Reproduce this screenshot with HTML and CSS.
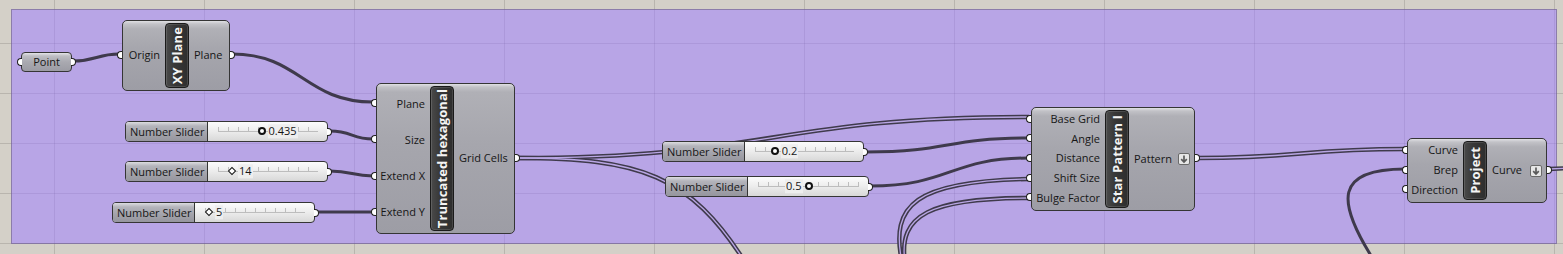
FILE: index.html
```html
<!DOCTYPE html>
<html lang="en">
<head>
  <meta charset="UTF-8">
  <title>Star Pattern definition</title>
  <link rel="stylesheet" href="styles.css">
</head>
<body>
  <div class="canvas">
    <div class="group"></div>

    <!-- wires sit over the group, under the components -->
    <svg class="wires" width="1563" height="254" viewBox="0 0 1563 254">
      <g class="single">
        <path d="M73,61 C96,61 97,54 119,54"/>
        <path d="M232,54 C300,54 305,102 373,102"/>
        <path d="M330,131 C352,131 352,139 373,139"/>
        <path d="M330,171 C352,171 352,176 373,176"/>
        <path d="M316,212 L373,212"/>
        <path d="M866,152 C950,152 945,138 1029,138"/>
        <path d="M870,186 C950,186 950,158 1029,158"/>
        <path d="M1375,262 C1335,200 1335,169 1405,169"/>
      </g>
      <g class="double">
        <path d="M517,158 C770,158 775,117 1029,117"/>
        <path d="M517,158 C640,158 690,175 745,262"/>
        <path d="M902,262 C890,205 915,181 1029,179"/>
        <path d="M905,262 C898,215 930,198 1029,198"/>
        <path d="M1197,158 C1300,158 1302,149 1405,149"/>
        <path d="M1549,169 L1570,168"/>
      </g>
      <g class="double-in">
        <path d="M517,158 C770,158 775,117 1029,117"/>
        <path d="M517,158 C640,158 690,175 745,262"/>
        <path d="M902,262 C890,205 915,181 1029,179"/>
        <path d="M905,262 C898,215 930,198 1029,198"/>
        <path d="M1197,158 C1300,158 1302,149 1405,149"/>
        <path d="M1549,169 L1570,168"/>
      </g>
    </svg>

    <div class="node param" id="point">
      <span class="grip in"></span>Point<span class="grip out"></span>
    </div>

    <div class="node comp" id="xy">
      <div class="ins">
        <div class="row"><span class="grip in"></span>Origin</div>
      </div>
      <div class="tag"><span>XY Plane</span></div>
      <div class="outs">
        <div class="row">Plane<span class="grip out"></span></div>
      </div>
    </div>

    <div class="node comp" id="hex">
      <div class="ins">
        <div class="row"><span class="grip in"></span>Plane</div>
        <div class="row"><span class="grip in"></span>Size</div>
        <div class="row"><span class="grip in"></span>Extend X</div>
        <div class="row"><span class="grip in"></span>Extend Y</div>
      </div>
      <div class="tag"><span>Truncated hexagonal</span></div>
      <div class="outs">
        <div class="row">Grid Cells<span class="grip out"></span></div>
      </div>
    </div>

    <div class="node slider" id="s1">
      <div class="s-name">Number Slider</div>
      <div class="s-body">
        <div class="track">
          <div class="rail"></div>
          <span class="knob" style="left:43.5%"></span>
          <span class="s-val" style="left:calc(43.5% + 6px)">0.435</span>
        </div>
      </div>
      <span class="grip out"></span>
    </div>

    <div class="node slider" id="s2">
      <div class="s-name">Number Slider</div>
      <div class="s-body">
        <div class="track">
          <div class="rail"></div>
          <span class="knob int" style="left:14%"></span>
          <span class="s-val" style="left:calc(14% + 6px)">14</span>
        </div>
      </div>
      <span class="grip out"></span>
    </div>

    <div class="node slider" id="s3">
      <div class="s-name">Number Slider</div>
      <div class="s-body">
        <div class="track">
          <div class="rail"></div>
          <span class="knob int" style="left:4%"></span>
          <span class="s-val" style="left:calc(4% + 6px)">5</span>
        </div>
      </div>
      <span class="grip out"></span>
    </div>

    <div class="node slider" id="s4">
      <div class="s-name">Number Slider</div>
      <div class="s-body">
        <div class="track">
          <div class="rail"></div>
          <span class="knob" style="left:20%"></span>
          <span class="s-val" style="left:calc(20% + 6px)">0.2</span>
        </div>
      </div>
      <span class="grip out"></span>
    </div>

    <div class="node slider" id="s5">
      <div class="s-name">Number Slider</div>
      <div class="s-body">
        <div class="track">
          <div class="rail"></div>
          <span class="knob" style="left:50%"></span>
          <span class="s-val" style="right:calc(50% + 6px)">0.5</span>
        </div>
      </div>
      <span class="grip out"></span>
    </div>

    <div class="node comp" id="star">
      <div class="ins">
        <div class="row"><span class="grip in"></span>Base Grid</div>
        <div class="row"><span class="grip in"></span>Angle</div>
        <div class="row"><span class="grip in"></span>Distance</div>
        <div class="row"><span class="grip in"></span>Shift Size</div>
        <div class="row"><span class="grip in"></span>Bulge Factor</div>
      </div>
      <div class="tag"><span>Star Pattern I</span></div>
      <div class="outs">
        <div class="row">Pattern
          <svg class="flat" width="12" height="12" viewBox="0 0 12 12"><rect x="0.5" y="0.5" width="11" height="11" rx="1.5"/><path d="M6,2.5 V9 M3.2,6.2 L6,9 L8.8,6.2"/></svg>
          <span class="grip out"></span>
        </div>
      </div>
    </div>

    <div class="node comp" id="proj">
      <div class="ins">
        <div class="row"><span class="grip in"></span>Curve</div>
        <div class="row"><span class="grip in"></span>Brep</div>
        <div class="row"><span class="grip in"></span>Direction</div>
      </div>
      <div class="tag"><span>Project</span></div>
      <div class="outs">
        <div class="row">Curve
          <svg class="flat" width="12" height="12" viewBox="0 0 12 12"><rect x="0.5" y="0.5" width="11" height="11" rx="1.5"/><path d="M6,2.5 V9 M3.2,6.2 L6,9 L8.8,6.2"/></svg>
          <span class="grip out"></span>
        </div>
      </div>
    </div>
  </div>
</body>
</html>
```

FILE: styles.css
```css
body {
  margin: 0;
  background-color: #d4d0c8;
}
.canvas {
  position: relative;
  width: 1563px;
  height: 254px;
  overflow: hidden;
  background-color: #d4d0c8;
  background-image:
    linear-gradient(to right, rgba(0, 0, 0, 0.13) 1px, transparent 1px),
    linear-gradient(to bottom, rgba(0, 0, 0, 0.13) 1px, transparent 1px);
  background-size: 150px 100%, 100% 50px;
  background-position: 54px 0, 0 43px;
}
.group {
  position: absolute;
  left: 11px;
  top: 9px;
  width: 1546px;
  height: 235px;
  box-sizing: border-box;
  background: rgba(162, 129, 255, 0.545);
  border: 1px solid rgba(95, 85, 110, 0.5);
}
.wires {
  position: absolute;
  left: 0;
  top: 0;
}
.wires path {
  fill: none;
}
.single path {
  stroke: #3f3a4c;
  stroke-width: 3;
}
.double path {
  stroke: #3f3a4c;
  stroke-width: 4.4;
}
.double-in path {
  stroke: #b9a6e4;
  stroke-width: 1.3;
}

/* nodes */
.node {
  position: absolute;
  box-sizing: border-box;
  font-family: "Open Sans", sans-serif;
  font-size: 11px;
  color: #161616;
  border: 1px solid #353535;
}
.grip {
  position: absolute;
  top: 50%;
  width: 5px;
  height: 8px;
  margin-top: -4px;
  box-sizing: border-box;
  background: #fff;
  border: 1.5px solid #1e1e1e;
}
.grip.in {
  left: -5px;
  border-right: none;
  border-radius: 5px 0 0 5px;
}
.grip.out {
  right: -5px;
  border-left: none;
  border-radius: 0 5px 5px 0;
}

.param {
  left: 21px;
  top: 52px;
  width: 51px;
  height: 20px;
  border-radius: 4px;
  display: flex;
  align-items: center;
  justify-content: center;
  padding-bottom: 1px;
  background: linear-gradient(to bottom, #e4e4e8 0, #bdbdc3 3px, #a9a9b0 9px, #9c9ca4 100%);
}

.comp {
  display: flex;
  padding: 2px 0;
  border-radius: 5px;
  background: linear-gradient(to bottom, #e0e0e4 0, #c2c2c7 3px, #b0b0b6 8px, #a6a6ad 40%, #9d9da5 100%);
}
.ins,
.outs {
  display: flex;
  flex-direction: column;
}
.outs {
  flex: 1;
}
.row {
  position: relative;
  flex: 1;
  display: flex;
  align-items: center;
  white-space: nowrap;
  padding-bottom: 2px;
}
.ins .row {
  justify-content: flex-end;
  padding-right: 5px;
}
.outs .row {
  justify-content: space-between;
  padding-left: 5px;
  padding-right: 4px;
}
.ins .grip.in {
  left: -6px;
  margin-top: -5px;
}
.outs .grip.out {
  right: -6px;
  margin-top: -5px;
}
.tag {
  flex: none;
  width: 24px;
  box-sizing: border-box;
  display: flex;
  align-items: center;
  justify-content: center;
  border: 1px solid #1a1a1a;
  border-radius: 4px;
  background: linear-gradient(to right, #4a4a4a 0, #383838 40%, #2e2e2e 100%);
  box-shadow: inset 0 0 0 1px rgba(255, 255, 255, 0.12);
}
.tag span {
  writing-mode: vertical-rl;
  transform: rotate(180deg);
  color: #f4f4f4;
  font-weight: bold;
  font-size: 13px;
  line-height: 22px;
  white-space: nowrap;
  letter-spacing: 0.1px;
}
.flat {
  margin-top: 2px;
}
.flat rect {
  fill: #e6e6e6;
  stroke: #6a6a6a;
}
.flat path {
  fill: none;
  stroke: #5a5a5a;
  stroke-width: 1.7;
}

#xy {
  left: 122px;
  top: 20px;
  width: 108px;
  height: 71px;
}
#xy .ins {
  width: 42px;
}
#hex {
  left: 376px;
  top: 83px;
  width: 139px;
  height: 151px;
}
#hex .ins {
  width: 53px;
}
#star {
  left: 1031px;
  top: 107px;
  width: 164px;
  height: 104px;
}
#star .ins {
  width: 73px;
}
#proj {
  left: 1407px;
  top: 138px;
  width: 140px;
  height: 65px;
}
#proj .ins {
  width: 55px;
}

/* number sliders */
.slider {
  display: flex;
  height: 21px;
  border-radius: 4px;
  background: linear-gradient(to bottom, #fcfcfc 0, #ececec 50%, #d8d8d8 100%);
}
.s-name {
  flex: none;
  width: 82px;
  box-sizing: border-box;
  display: flex;
  align-items: center;
  padding-left: 4px;
  padding-bottom: 1px;
  border-right: 1px solid #353535;
  border-radius: 3px 0 0 3px;
  white-space: nowrap;
  background: linear-gradient(to bottom, #dcdce0 0, #b4b4bb 4px, #a3a3ab 60%, #96969e 100%);
}
.s-body {
  position: relative;
  flex: 1;
}
.track {
  position: absolute;
  left: 10px;
  right: 9px;
  top: 0;
  bottom: 0;
}
.rail {
  position: absolute;
  left: 0;
  right: 0;
  top: 5px;
  height: 4px;
  border-bottom: 1px solid #bdbdbd;
  background: repeating-linear-gradient(to right, #bdbdbd 0 1px, transparent 1px 10px);
}
.knob {
  position: absolute;
  top: 50%;
  width: 8px;
  height: 8px;
  margin: -5px 0 0 -4px;
  box-sizing: border-box;
  border: 2px solid #111;
  border-radius: 50%;
  background: #fff;
}
.knob.int {
  width: 6px;
  height: 6px;
  margin: -4px 0 0 -3px;
  border-width: 1.5px;
  border-radius: 0;
  transform: rotate(45deg);
}
.s-val {
  position: absolute;
  top: 50%;
  transform: translateY(-55%);
  line-height: 14px;
  padding: 0 1px;
  background: #eeeeee;
}

#s1 {
  left: 125px;
  top: 121px;
  width: 203px;
}
#s2 {
  left: 125px;
  top: 161px;
  width: 203px;
}
#s3 {
  left: 112px;
  top: 202px;
  width: 203px;
}
#s4 {
  left: 662px;
  top: 141px;
  width: 202px;
}
#s5 {
  left: 665px;
  top: 176px;
  width: 204px;
}
```
